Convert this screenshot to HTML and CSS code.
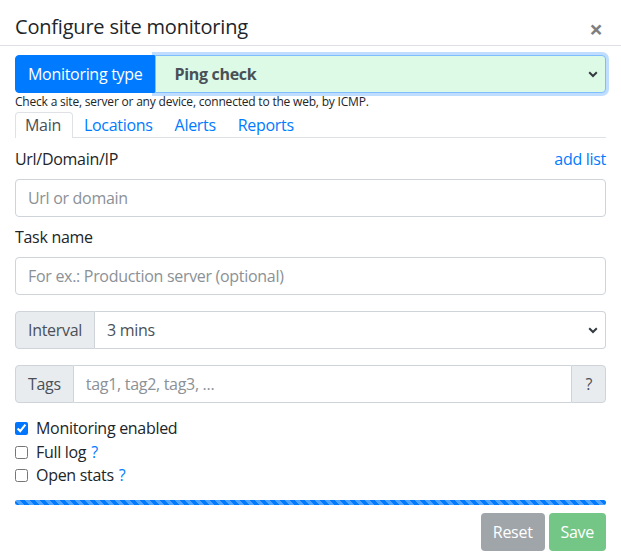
FILE: index.html
```html
<!DOCTYPE html>
<html>
<head>
<meta charset="utf-8">
<link rel="stylesheet" href="styles.css">
</head>
<body>
<div class="modal">
  <div class="modal-header">
    <h5 class="modal-title">Configure site monitoring</h5>
    <button class="close" type="button">&times;</button>
  </div>
  <div class="modal-body">
    <div class="input-group">
      <span class="addon addon-primary">Monitoring type</span>
      <select class="select select-type">
        <option>Ping check</option>
      </select>
    </div>
    <div class="help">Check a site, server or any device, connected to the web, by ICMP.</div>
    <ul class="tabs">
      <li class="tab active">Main</li>
      <li class="tab">Locations</li>
      <li class="tab">Alerts</li>
      <li class="tab">Reports</li>
    </ul>
    <div class="tab-content">
      <div class="label-row">
        <label class="label">Url/Domain/IP</label>
        <a class="link">add list</a>
      </div>
      <input class="control" type="text" placeholder="Url or domain">
      <div class="label-row">
        <label class="label">Task name</label>
      </div>
      <input class="control" type="text" placeholder="For ex.: Production server (optional)">

      <div class="input-group group-gap">
        <span class="addon">Interval</span>
        <select class="select">
          <option>3 mins</option>
        </select>
      </div>

      <div class="input-group group-gap">
        <span class="addon">Tags</span>
        <input class="control grow" type="text" placeholder="tag1, tag2, tag3, ...">
        <span class="addon addon-end">?</span>
      </div>

      <div class="checks">
        <label class="check"><input type="checkbox" checked> Monitoring enabled</label>
        <label class="check"><input type="checkbox"> Full log <span class="q">?</span></label>
        <label class="check"><input type="checkbox"> Open stats <span class="q">?</span></label>
      </div>

      <div class="progress"><div class="progress-bar"></div></div>

      <div class="footer">
        <button class="btn btn-reset" type="button">Reset</button>
        <button class="btn btn-save" type="button">Save</button>
      </div>
    </div>
  </div>
</div>
</body>
</html>
```
FILE: styles.css
```css
* { box-sizing: border-box; }
html, body {
  margin: 0;
  padding: 0;
  background: #fff;
}
body {
  font-family: "Open Sans", "Noto Sans", sans-serif;
  font-size: 16px;
  line-height: 1.5;
  letter-spacing: -0.3px;
  color: #212529;
  width: 621px;
  height: 553px;
  overflow: hidden;
}
.modal {
  width: 621px;
}
.modal-header {
  display: flex;
  align-items: center;
  justify-content: space-between;
  padding: 12px 15px 3px 15px;
  border-bottom: 1px solid #dee2e6;
}
.modal-title {
  margin: 0;
  font-size: 20px;
  font-weight: 500;
  line-height: 30px;
  letter-spacing: -0.2px;
}
.close {
  border: 0;
  background: transparent;
  padding: 0;
  margin: 4px 3px 0 0;
  font-family: "Open Sans", sans-serif;
  font-size: 24px;
  font-weight: 700;
  line-height: 1;
  color: #000;
  opacity: .5;
}
.modal-body {
  padding: 9px 15px 0 15px;
}
.input-group {
  display: flex;
  height: 38px;
}
.group-gap { margin-top: 16px; }
.addon {
  display: flex;
  align-items: center;
  padding: 0 12px;
  background: #e9ecef;
  border: 1px solid #ced4da;
  color: #495057;
  border-radius: 4px 0 0 4px;
  white-space: nowrap;
}
.addon-primary {
  background: #007bff;
  border-color: #007bff;
  color: #fff;
}
.addon-end {
  border-radius: 0 4px 4px 0;
  padding: 0 13px;
}
.select {
  flex: 1;
  appearance: none;
  -webkit-appearance: none;
  height: 38px;
  border: 1px solid #ced4da;
  border-left: 0;
  border-radius: 0 4px 4px 0;
  padding: 0 28px 0 12px;
  font-family: inherit;
  font-size: 16px;
  letter-spacing: -0.3px;
  color: #495057;
  background: #fff url("data:image/svg+xml,%3Csvg xmlns='http://www.w3.org/2000/svg' width='10' height='7' viewBox='0 0 10 7'%3E%3Cpath d='M1.2 1.2 L5 5 L8.8 1.2' fill='none' stroke='%23343a40' stroke-width='2'/%3E%3C/svg%3E") no-repeat right 7px center / 10px 7px;
}
.select-type {
  font-weight: 700;
  padding-left: 18px;
  background-color: #ddfae6;
  border: 1px solid #80bdff;
  box-shadow: 0 0 0 3px rgba(0,123,255,.25);
  position: relative;
}
.help {
  font-size: 12px;
  line-height: 18px;
  margin-top: 0;
  color: #212529;
  letter-spacing: -0.2px;
}
.tabs {
  list-style: none;
  margin: 1px 0 0 0;
  padding: 0;
  display: flex;
  border-bottom: 1px solid #dee2e6;
}
.tab {
  padding: 0 10px;
  line-height: 24px;
  border: 1px solid transparent;
  border-bottom: 0;
  border-radius: 4px 4px 0 0;
  color: #007bff;
  margin-bottom: -1px;
}
.tab.active {
  color: #495057;
  border-color: #dee2e6;
  background: #fff;
  padding: 0 11px 1px 9px;
}
.tab-content {
  padding-top: 9px;
}
.label-row {
  display: flex;
  justify-content: space-between;
  margin-bottom: 8px;
  line-height: 24px;
}
.control + .label-row { margin-top: 8px; }
.link { color: #007bff; }
.control {
  display: block;
  width: 100%;
  height: 38px;
  border: 1px solid #ced4da;
  border-radius: 4px;
  padding: 0 12px;
  font-family: inherit;
  font-size: 16px;
  letter-spacing: -0.3px;
  color: #495057;
  background: #fff;
}
.control::placeholder { color: #8b9196; }
.control.grow {
  flex: 1;
  width: auto;
  border-radius: 0;
  border-left: 0;
  border-right: 0;
}
.checks {
  margin-top: 14px;
  display: flex;
  flex-direction: column;
}
.check {
  display: flex;
  align-items: center;
  line-height: 23.5px;
}
.check input {
  margin: 0 8px 0 0;
  width: 13px;
  height: 13px;
  accent-color: #0075ff;
}
.q {
  color: #007bff;
  margin-left: 5px;
}
.progress {
  margin-top: 12px;
  height: 5px;
  border-radius: 3px;
  overflow: hidden;
  background: #e9ecef;
}
.progress-bar {
  height: 100%;
  width: 100%;
  background-color: #007bff;
  background-image: linear-gradient(45deg, rgba(255,255,255,.3) 25%, transparent 25%, transparent 50%, rgba(255,255,255,.3) 50%, rgba(255,255,255,.3) 75%, transparent 75%, transparent);
  background-size: 10px 10px;
}
.footer {
  display: flex;
  justify-content: flex-end;
  gap: 4px;
  margin-top: 8px;
}
.btn {
  height: 38px;
  border: 0;
  border-radius: 4px;
  padding: 0 12px;
  font-family: inherit;
  font-size: 16px;
  letter-spacing: -0.3px;
  color: #fff;
}
.btn-reset { background: #a0a5aa; }
.btn-save { background: #73c686; }
```
